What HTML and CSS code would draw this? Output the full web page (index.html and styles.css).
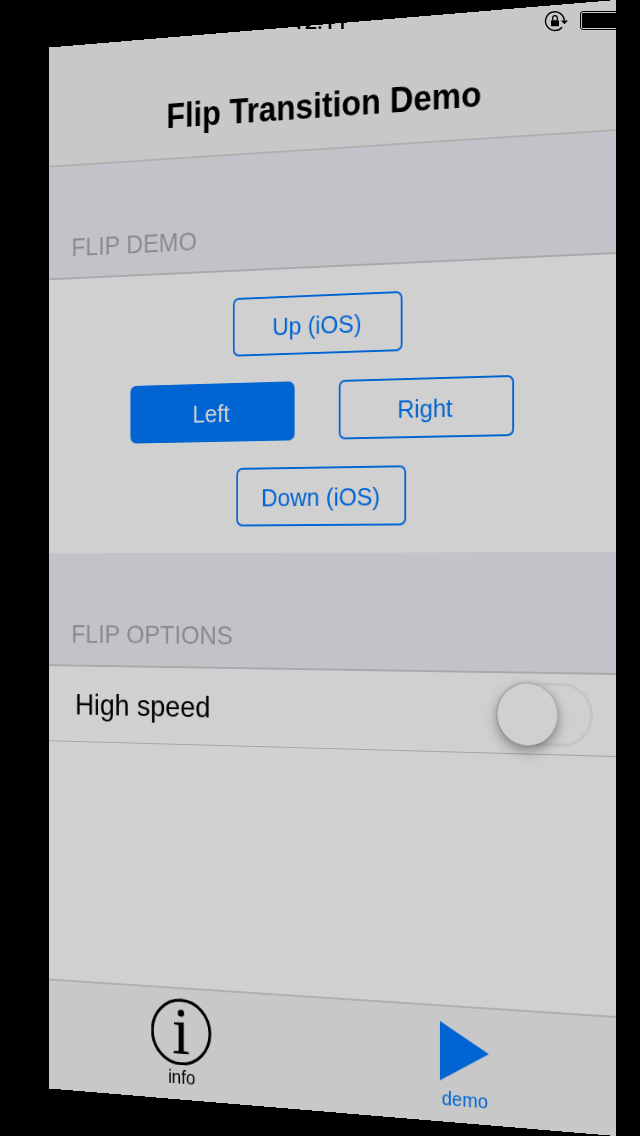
FILE: index.html
```html
<!DOCTYPE html>
<html lang="en">
<head>
<meta charset="utf-8">
<title>Flip Transition Demo</title>
<link rel="stylesheet" href="styles.css">
</head>
<body>
<main class="device">
  <section class="screen">
    <header class="navbar"><h1 class="title">Flip Transition Demo</h1></header>
    <h2 class="section-header section-header-demo">FLIP DEMO</h2>
    <div class="flip-pad">
      <button class="btn btn-up">Up (iOS)</button>
      <div class="btn-row">
        <button class="btn btn-filled">Left</button>
        <button class="btn">Right</button>
      </div>
      <button class="btn btn-down">Down (iOS)</button>
    </div>
    <h2 class="section-header section-header-options">FLIP OPTIONS</h2>
    <div class="option">
      <span class="option-label">High speed</span>
      <span class="switch"><span class="thumb"></span></span>
    </div>
    <div class="filler"></div>
    <nav class="tabbar">
      <div class="tab">
        <svg class="tab-icon" width="72" height="72" viewBox="-35.2 -36.8 72 72">
          <circle r="34" fill="none" stroke="#000" stroke-width="3.2"/>
          <circle cy="-20" r="3.8"/>
          <path d="M-8.2-9.8L3.3-10.2V20.4L9.2 21V23.2H-8.6V21L-2.7 20.4V-7L-8.2-7.7Z"/>
        </svg>
        <span class="tab-label">info</span>
      </div>
      <div class="tab tab-active">
        <svg class="tab-icon" width="72" height="72" viewBox="-36 -36.5 72 72">
          <path d="M-27-30.5L26 0L-27 30.5Z" fill="#0064d2"/>
        </svg>
        <span class="tab-label">demo</span>
      </div>
    </nav>
  </section>
  <div class="status-bar">
    <span class="clock">12:11</span>
    <span class="indicators">
      <svg width="24" height="22" viewBox="0 0 24 22">
        <path d="M18.1 17.2A9.4 9.4 0 1 1 20.3 10.5" fill="none" stroke="#000" stroke-width="1.4"/>
        <path d="M16.9 10.5H24L20.4 14.2Z"/>
        <rect x="7" y="10.3" width="8" height="6" rx=".5"/>
        <path d="M8.7 10.5V8a2.3 2.3 0 0 1 4.6 0V10.5" fill="none" stroke="#000" stroke-width="1.3"/>
      </svg>
      <span class="battery"><span class="charge"></span></span>
    </span>
  </div>
</main>
</body>
</html>
```
FILE: styles.css
```css
body {
  margin: 0;
  background: #000;
  font-family: "Liberation Sans", Arial, sans-serif;
}

.device {
  position: relative;
  width: 640px;
  height: 1136px;
  overflow: hidden;
}

/* Screen caught mid-flip: rotated about the vertical axis */
.screen {
  display: flex;
  flex-direction: column;
  width: 640px;
  height: 1136px;
  background: #d0d0d0;
  transform-origin: 0 0;
  transform: matrix3d(0.80547, -0.07422, 0, -0.00013066, 0, 0.91638, 0, 0, 0, 0, 1, 0, 49, 47.5, 0, 1);
}

.navbar {
  box-sizing: border-box;
  height: 131px;
  padding-top: 64px;
  background: #c8c8c8;
  border-bottom: 2px solid #b0b0b1;
}

.title {
  margin: 0;
  font-size: 36px;
  line-height: 42px;
  text-align: center;
}

.section-header {
  box-sizing: border-box;
  margin: 0;
  padding: 0 27.5px 16px;
  display: flex;
  align-items: flex-end;
  background: #c3c2c8;
  border-bottom: 2px solid #a9a9ac;
  color: #8b8b8d;
  font-size: 28px;
  font-weight: 400;
  line-height: 32px;
}

.section-header-demo { height: 123px; }
.section-header-options { height: 123px; padding-bottom: 17px; }

.flip-pad {
  box-sizing: border-box;
  height: 298px;
  padding-top: 28px;
  display: flex;
  flex-direction: column;
  gap: 28px;
}

.btn {
  box-sizing: border-box;
  width: 192px;
  height: 62px;
  padding: 2px 0 0;
  border: 2px solid #0064d2;
  border-radius: 7px;
  background: transparent;
  color: #0064d2;
  font: 26px "Liberation Sans", Arial, sans-serif;
}

.btn-up { margin-left: 220px; }
.btn-down { margin-left: 224px; }
.btn-filled { background: #0064d2; color: #d0d0d0; }

.btn-row {
  display: flex;
  gap: 50px;
  padding-left: 98.5px;
}

.option {
  box-sizing: border-box;
  height: 82px;
  padding: 0 24px 0 32px;
  display: flex;
  align-items: center;
  justify-content: space-between;
  border-bottom: 1px solid #a4a4a6;
}

.option-label {
  padding-top: 2px;
  font-size: 32px;
}

.switch {
  box-sizing: border-box;
  width: 102px;
  height: 64px;
  border: 3px solid #c5c5c9;
  border-radius: 32px;
}

.thumb {
  display: block;
  width: 64px;
  height: 63px;
  margin: -2px 0 0 -2px;
  border-radius: 50%;
  background: #d0d0d0;
  box-shadow: 0 0 3px rgba(0, 0, 0, 0.25), 0 5px 14px rgba(0, 0, 0, 0.38);
}

.filler { flex: 1; }

.tabbar {
  box-sizing: border-box;
  height: 120px;
  display: flex;
  background: #c8c8c8;
  border-top: 2px solid #afafb0;
}

.tab {
  flex: 1;
  padding-top: 9px;
  display: flex;
  flex-direction: column;
  align-items: center;
}

.tab-icon { display: block; }

.tab-label {
  font-size: 20px;
  line-height: 22px;
  margin-top: 1.5px;
}

.tab-active { color: #0064d2; }

/* The system status bar stays flat above the flipping screen */
.status-bar {
  position: absolute;
  inset: 0 0 auto 0;
  height: 41px;
  display: grid;
  grid-template-columns: 1fr auto 1fr;
  align-items: center;
  color: #000;
}

.clock {
  grid-column: 2;
  padding-top: 1px;
  font-family: Roboto, "Liberation Sans", sans-serif;
  font-size: 22px;
  font-weight: 500;
}

.indicators {
  display: flex;
  align-items: center;
  justify-content: flex-end;
  gap: 12px;
  padding-right: 11px;
}

.battery {
  box-sizing: border-box;
  width: 49px;
  height: 19px;
  padding: 1px;
  border: 1px solid #000;
  border-radius: 3px;
}

.charge {
  display: block;
  height: 15px;
  border-radius: 1px;
  background: #000;
}
```
